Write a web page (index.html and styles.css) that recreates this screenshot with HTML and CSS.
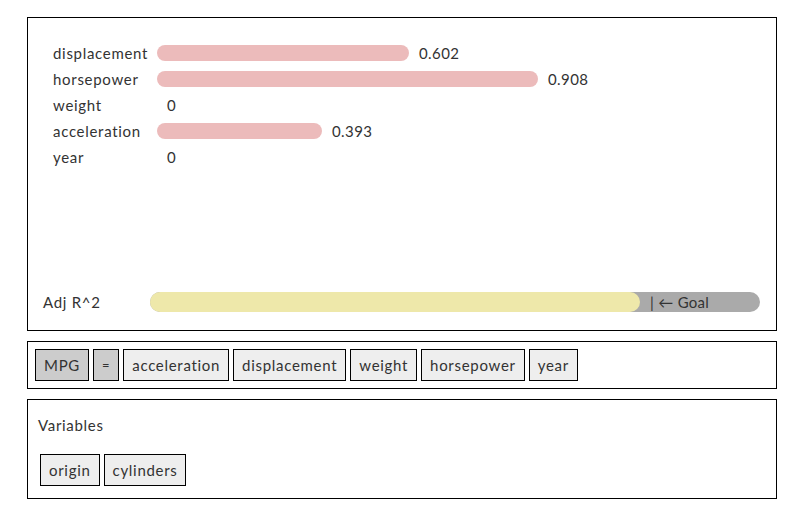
FILE: index.html
```html
<!DOCTYPE html>
<html>
<head>
<meta charset="utf-8">
<link rel="stylesheet" href="styles.css">
</head>
<body>
<div class="app">
  <section class="panel chart">
    <div class="rows">
      <div class="row"><span class="label">displacement</span><span class="bar" style="width:252px"></span><span class="val">0.602</span></div>
      <div class="row"><span class="label">horsepower</span><span class="bar" style="width:381px"></span><span class="val">0.908</span></div>
      <div class="row"><span class="label">weight</span><span class="bar" style="width:0px"></span><span class="val">0</span></div>
      <div class="row"><span class="label">acceleration</span><span class="bar" style="width:165px"></span><span class="val">0.393</span></div>
      <div class="row"><span class="label">year</span><span class="bar" style="width:0px"></span><span class="val">0</span></div>
    </div>
    <div class="adj">
      <span class="adj-label">Adj R^2</span>
      <div class="track">
        <div class="fill" style="width:490px"></div>
        <span class="goal">| ← Goal</span>
      </div>
    </div>
  </section>
  <section class="panel formula">
    <span class="tok dep">MPG</span>
    <span class="tok dep eq">=</span>
    <span class="tok">acceleration</span>
    <span class="tok">displacement</span>
    <span class="tok">weight</span>
    <span class="tok">horsepower</span>
    <span class="tok">year</span>
  </section>
  <section class="panel vars">
    <div class="vars-title">Variables</div>
    <div class="vars-list">
      <span class="tok">origin</span>
      <span class="tok">cylinders</span>
    </div>
  </section>
</div>
</body>
</html>
```
FILE: styles.css
```css
html, body {
  margin: 0;
  padding: 0;
  background: #fff;
}
body {
  font-family: "Lato", "Open Sans", sans-serif;
  font-size: 15px;
  letter-spacing: 0.7px;
  color: #333;
}
.app {
  width: 750px;
  margin: 17px 0 0 27px;
  display: flex;
  flex-direction: column;
  gap: 10px;
}
.panel {
  border: 1px solid #000;
  box-sizing: border-box;
}
.chart {
  height: 314px;
  padding: 22px 16px 18px 0;
  display: flex;
  flex-direction: column;
  justify-content: space-between;
}
.rows {
  padding-left: 25px;
  display: flex;
  flex-direction: column;
}
.row {
  height: 26px;
  display: flex;
  align-items: center;
}
.label {
  width: 104px;
  flex: none;
}
.bar {
  height: 16px;
  border-radius: 8px;
  background: #ecbbbb;
  flex: none;
}
.val {
  margin-left: 10px;
  letter-spacing: 0.4px;
}
.adj {
  padding-left: 15px;
  display: flex;
  align-items: center;
  height: 20px;
}
.adj-label {
  width: 107px;
  flex: none;
}
.track {
  width: 610px;
  height: 20px;
  border-radius: 10px;
  background: #aaa;
  display: flex;
  align-items: center;
}
.fill {
  height: 20px;
  border-radius: 10px;
  background: #eee8aa;
  flex: none;
}
.goal {
  margin-left: 10px;
  color: #333;
  letter-spacing: 0.3px;
}
.formula {
  height: 48px;
  padding: 7px 7px;
  display: flex;
  gap: 4px;
}
.tok {
  height: 32px;
  box-sizing: border-box;
  border: 1px solid #000;
  background: #eee;
  padding: 0 8px;
  display: inline-flex;
  align-items: center;
}
.dep {
  background: #ccc;
}
.eq {
  padding: 0 8px;
  font-size: 13px;
}
.vars {
  height: 100px;
  padding: 15px 10px 0;
}
.vars-title {
  height: 20px;
  line-height: 20px;
  margin-bottom: 19px;
}
.vars-list {
  padding-left: 2px;
  display: flex;
  gap: 4px;
}
```
